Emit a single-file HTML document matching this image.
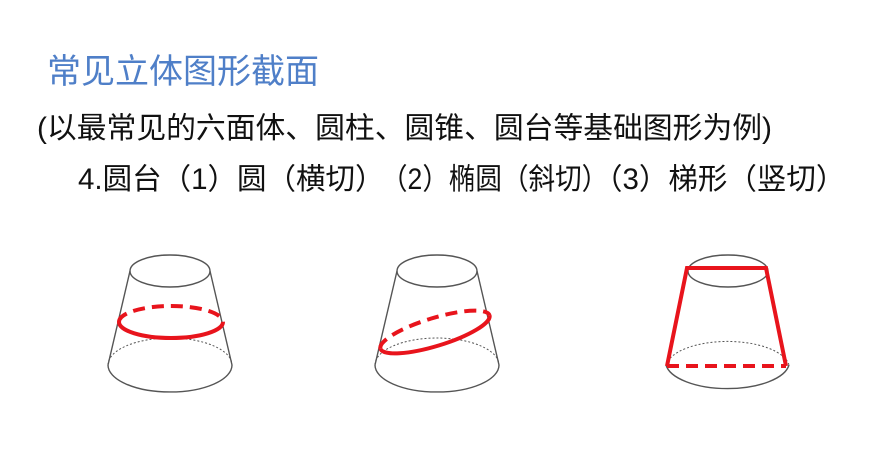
<!DOCTYPE html>
<html><head><meta charset="utf-8"><style>
body{margin:0;width:887px;height:457px;background:#fff;position:relative;overflow:hidden;font-family:"Liberation Sans","Noto Sans CJK SC",sans-serif;}
.t{position:absolute;white-space:nowrap;line-height:1;}
</style></head><body>
<div class="t" style="left:47px;top:55px;font-size:34px;color:#4f7fc8;">常见立体图形截面</div>
<div class="t" style="left:37px;top:114px;font-size:29.8px;color:#111;">(以最常见的六面体、圆柱、圆锥、圆台等基础图形为例)</div>
<div class="t" style="left:78px;top:165px;font-size:29.5px;color:#111;">4.圆台（1）圆（横切）</div>
<div class="t" style="left:381px;top:165px;font-size:29.5px;color:#111;transform:scaleX(0.9);transform-origin:0 0;">（2）椭圆（斜切）</div>
<div class="t" style="left:593px;top:165px;font-size:29.5px;color:#111;">（3）梯形（竖切）</div>
<svg width="887" height="457" style="position:absolute;left:0;top:0" fill="none">
<g stroke="#555" stroke-width="1.4">
<ellipse cx="170" cy="271" rx="40" ry="16"/>
<line x1="130" y1="271" x2="108" y2="365"/><line x1="210" y1="271" x2="232" y2="365"/>
<path d="M108 365 A62 27 0 0 0 232 365"/>
<path d="M108 365 A62 27 0 0 1 232 365" stroke-dasharray="2 2" stroke-width="1"/>
<ellipse cx="437" cy="271" rx="40" ry="16"/>
<line x1="397" y1="271" x2="375" y2="365"/><line x1="477" y1="271" x2="499" y2="365"/>
<path d="M375 365 A62 27 0 0 0 499 365"/>
<path d="M375 365 A62 27 0 0 1 499 365" stroke-dasharray="2 2" stroke-width="1"/>
<ellipse cx="728" cy="271" rx="40" ry="16"/>
<path d="M666 365 A62 27 0 0 0 789 365"/>
<path d="M666 365 A62 27 0 0 1 789 365" stroke-dasharray="2 2" stroke-width="1"/>
</g>
<g stroke="#e8141c" stroke-width="4">
<path d="M119 322 A52 16 0 0 0 223 322"/>
<path d="M119 322 A52 16 0 0 1 223 322" stroke-dasharray="12 7"/>
<g transform="rotate(-17 435 332)">
<path d="M378 332 A57 14 0 0 0 492 332"/>
<path d="M378 332 A57 14 0 0 1 492 332" stroke-dasharray="12 7"/>
</g>
<path d="M667 366 L687 268 L766 268 L786 366"/>
<path d="M667 366 L786 366" stroke-dasharray="12 7"/>
</g>
</svg>
</body></html>
